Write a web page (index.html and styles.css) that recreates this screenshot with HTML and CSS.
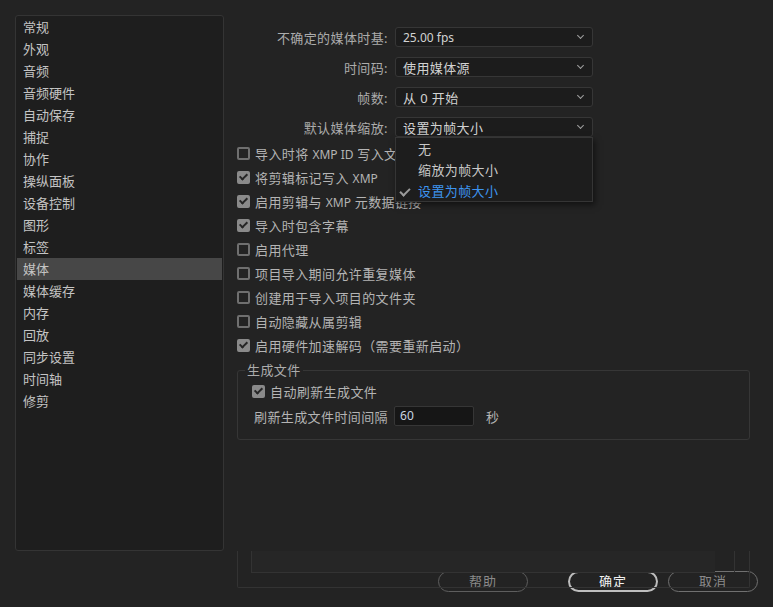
FILE: index.html
```html
<!DOCTYPE html>
<html lang="zh-CN">
<head>
  <meta charset="UTF-8">
  <meta name="viewport" content="width=device-width, initial-scale=1.0">
  <title>首选项 - 媒体</title>
  <link rel="stylesheet" href="styles.css">
</head>
<body>
  <div class="window">
    <div class="top">
      <ul class="sidebar">
        <li>常规</li>
        <li>外观</li>
        <li>音频</li>
        <li>音频硬件</li>
        <li>自动保存</li>
        <li>捕捉</li>
        <li>协作</li>
        <li>操纵面板</li>
        <li>设备控制</li>
        <li>图形</li>
        <li>标签</li>
        <li class="active">媒体</li>
        <li>媒体缓存</li>
        <li>内存</li>
        <li>回放</li>
        <li>同步设置</li>
        <li>时间轴</li>
        <li>修剪</li>
      </ul>

      <section class="pane">
        <div class="form">
          <div class="row">
            <label class="label">不确定的媒体时基:</label>
            <div class="select"><span class="value lat">25.00 fps</span><span class="chev"></span></div>
          </div>
          <div class="row">
            <label class="label">时间码:</label>
            <div class="select"><span class="value">使用媒体源</span><span class="chev"></span></div>
          </div>
          <div class="row">
            <label class="label">帧数:</label>
            <div class="select"><span class="value">从 0 开始</span><span class="chev"></span></div>
          </div>
          <div class="row">
            <label class="label">默认媒体缩放:</label>
            <div class="select open"><span class="value">设置为帧大小</span><span class="chev"></span>
              <ul class="menu">
                <li>无</li>
                <li>缩放为帧大小</li>
                <li class="selected"><span class="tick"></span>设置为帧大小</li>
              </ul>
            </div>
          </div>
        </div>

        <ul class="checks">
          <li><span class="box"></span><span class="text">导入时将 <span class="lat">XMP ID</span> 写入文件</span></li>
          <li><span class="box on"></span><span class="text">将剪辑标记写入 <span class="lat">XMP</span></span></li>
          <li><span class="box on"></span><span class="text">启用剪辑与 <span class="lat">XMP</span> 元数据链接</span></li>
          <li><span class="box on"></span><span class="text">导入时包含字幕</span></li>
          <li><span class="box"></span><span class="text">启用代理</span></li>
          <li><span class="box"></span><span class="text">项目导入期间允许重复媒体</span></li>
          <li><span class="box"></span><span class="text">创建用于导入项目的文件夹</span></li>
          <li><span class="box"></span><span class="text">自动隐藏从属剪辑</span></li>
          <li><span class="box on"></span><span class="text">启用硬件加速解码（需要重新启动）</span></li>
        </ul>

        <fieldset class="group">
          <legend>生成文件</legend>
          <div class="check-row"><span class="box on"></span><span class="text">自动刷新生成文件</span></div>
          <div class="interval">
            <span>刷新生成文件时间间隔</span>
            <span class="input lat">60</span>
            <span class="unit">秒</span>
          </div>
        </fieldset>
      </section>
    </div>

    <div class="bottom">
      <div class="frame">
        <div class="frame-inner"></div>
        <div class="frame-bar"></div>
      </div>
      <div class="buttons">
        <button class="btn help">帮助</button>
        <button class="btn ok">确定</button>
        <button class="btn cancel">取消</button>
      </div>
    </div>
  </div>
</body>
</html>
```

FILE: styles.css
```css
body {
  margin: 0;
  background: #232323;
  font-family: "Noto Sans", "Noto Sans CJK SC", sans-serif;
  font-size: 13px;
  color: #b4b4b4;
  width: 773px;
  height: 607px;
  overflow: hidden;
}
ul {
  list-style: none;
  margin: 0;
  padding: 0;
}
.window {
  padding: 15px 0 0 15px;
}
.top {
  display: flex;
  height: 536px;
}
.lat {
  font-size: 12px;
  letter-spacing: 0;
}

/* sidebar */
.sidebar {
  width: 209px;
  box-sizing: border-box;
  height: 536px;
  background: #1e1e1e;
  border: 1px solid #343434;
  border-radius: 3px;
  padding: 0 1px;
}
.sidebar li {
  height: 22px;
  line-height: 22px;
  padding-left: 6px;
  color: #c4c4c4;
}
.sidebar li.active {
  background: #474747;
}

/* right pane */
.pane {
  flex: 1;
  padding: 12px 0 0 13px;
  letter-spacing: 0.4px;
}
.form {
  display: flex;
  flex-direction: column;
  gap: 10px;
}
.row {
  display: flex;
  align-items: center;
  height: 20px;
}
.label {
  width: 151px;
  text-align: right;
  margin-right: 7px;
  color: #acacac;
}
.select {
  position: relative;
  width: 198px;
  height: 20px;
  box-sizing: border-box;
  background: #1c1c1c;
  border: 1px solid #363636;
  border-radius: 3px;
  display: flex;
  align-items: center;
  padding-left: 7px;
  color: #d2d2d2;
}
.value {
  flex: 1;
}
.chev {
  width: 4px;
  height: 4px;
  border-right: 1px solid #a0a0a0;
  border-bottom: 1px solid #a0a0a0;
  transform: rotate(45deg);
  margin: 0 9px 3px 0;
}
.menu {
  position: absolute;
  top: 19px;
  left: -1px;
  width: 198px;
  height: 65px;
  box-sizing: border-box;
  background: #1d1d1d;
  border: 1px solid #353535;
  box-shadow: 2px 3px 6px rgba(0, 0, 0, 0.5);
  padding-top: 1px;
  z-index: 2;
}
.menu li {
  position: relative;
  height: 21px;
  line-height: 21px;
  padding-left: 22px;
  color: #c8c8c8;
}
.menu li.selected {
  color: #3d95f0;
}
.tick {
  position: absolute;
  left: 6px;
  top: 5px;
  width: 4px;
  height: 8px;
  border-right: 2px solid #9a9a9a;
  border-bottom: 2px solid #9a9a9a;
  transform: rotate(45deg);
}

/* checkboxes */
.checks {
  margin-top: 4px;
}
.checks li,
.check-row {
  height: 24px;
  display: flex;
  align-items: center;
  white-space: nowrap;
}
.box {
  width: 13px;
  height: 13px;
  box-sizing: border-box;
  border: 2px solid #6f6f6f;
  border-radius: 2px;
  margin-right: 5px;
  position: relative;
  flex: none;
}
.box.on {
  background: #8a8a8a;
  border-color: #8a8a8a;
}
.box.on::after {
  content: "";
  position: absolute;
  left: 2px;
  top: -1px;
  width: 3px;
  height: 6px;
  border-right: 2px solid #262626;
  border-bottom: 2px solid #262626;
  transform: rotate(45deg);
}

/* group */
.group {
  width: 513px;
  box-sizing: border-box;
  margin: 5px 0 0;
  padding: 0 14px 10px;
  border: 1px solid #363636;
  border-radius: 3px;
}
.group legend {
  padding: 0 2px;
  margin-left: -7px;
  line-height: 17px;
  color: #acacac;
}
.interval {
  display: flex;
  align-items: center;
  height: 26px;
  margin-left: 2px;
}
.input {
  width: 80px;
  height: 20px;
  box-sizing: border-box;
  margin-left: 6px;
  background: #161616;
  border: 1px solid #363636;
  border-radius: 2px;
  line-height: 18px;
  padding-left: 5px;
  color: #c8d4e0;
}
.unit {
  margin-left: 12px;
}

/* bottom */
.bottom {
  padding-left: 222px;
}
.frame {
  position: relative;
  width: 513px;
  height: 37px;
  box-sizing: border-box;
  border: 1px solid #333;
  border-top: none;
  border-radius: 0 0 2px 2px;
}
.frame-inner {
  margin-left: 13px;
  width: 463px;
  height: 21px;
  background: #262626;
  border-left: 1px solid #333;
  border-bottom: 1px solid #333;
}
.frame-bar {
  position: absolute;
  top: 0;
  left: 496px;
  width: 1px;
  height: 21px;
  background: #333;
}
.buttons {
  display: flex;
  margin: -17px 0 0 201px;
}
.btn {
  width: 90px;
  height: 21px;
  box-sizing: border-box;
  border-radius: 11px;
  background: #232323;
  font-family: inherit;
  font-size: 13px;
  letter-spacing: 1px;
  line-height: 17px;
  padding: 0;
  border: 1px solid #5e5e5e;
  color: #8a8a8a;
}
.btn.ok {
  margin-left: 40px;
  border: 2px solid #bdbdbd;
  color: #f0f0f0;
}
.btn.cancel {
  margin-left: 10px;
  border-color: #707070;
}
```
